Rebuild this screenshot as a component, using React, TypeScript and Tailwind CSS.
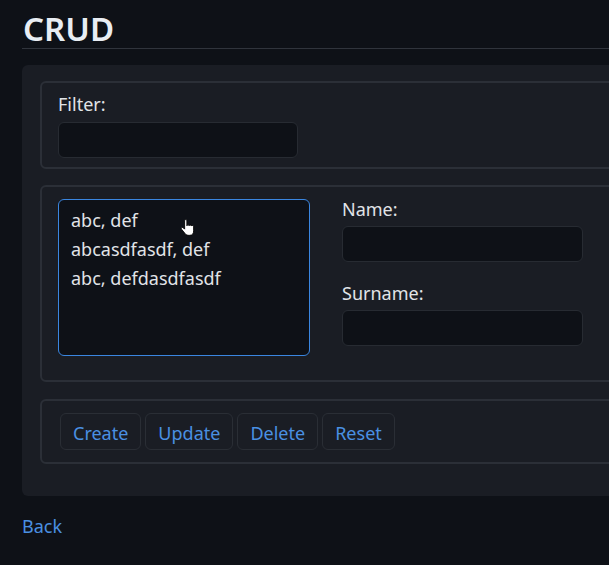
import React from 'react';

const items = ['abc, def', 'abcasdfasdf, def', 'abc, defdasdfasdf'];

// mouse pointer captured in the screenshot
function HandCursor() {
  return (
    <svg
      className="absolute left-[121px] top-[19px]"
      width="16"
      height="18"
      viewBox="0 0 14 16"
    >
      <path
        d="M4 1.5Q4 .5 5 .5Q6 .5 6 1.5V6Q6 5.2 7 5.2Q8 5.2 8 6Q8 5.4 9 5.4Q10 5.4 10 6.2Q10 5.8 11 5.8Q12 5.8 12 6.8V10.5Q12 14.5 8.5 14.5H7Q5 14.5 4 12.5L1.2 9Q.6 8 1.5 7.6Q2.3 7.3 3 8L4 9Z"
        fill="#ffffff"
        stroke="#000000"
        strokeWidth="0.8"
      />
    </svg>
  );
}

export default function App() {
  return (
    <div className="min-h-screen bg-[#0e1117] text-[#e1e4e8] font-['Noto_Sans',sans-serif] pl-[22px] pt-[10px] overflow-hidden">
      <h1 className="text-[33px] font-semibold leading-[38px] text-[#e8edf3] pl-px">CRUD</h1>
      <div className="border-t border-[#30343c]" />

      <div className="mt-4 rounded-md bg-[#1a1d24] pl-[18px] pt-4 pb-8 w-[640px]">
        {/* Filter */}
        <div className="rounded-md border-2 border-[#2b2f37] px-4 pt-[9px] pb-[9px]">
          <label className="block text-[18px] leading-6">Filter:</label>
          <input className="mt-[6px] block h-9 w-[240px] rounded-md border border-[#272b32] bg-[#0e1117] px-2 outline-none" />
        </div>

        {/* List + form */}
        <div className="mt-[16px] flex rounded-md border-2 border-[#2b2f37] px-4 pt-3 pb-6">
          <div className="relative h-[157px] w-[252px] rounded-md border border-[#3a86e0] bg-[#0e1117] px-3 pt-[6px]">
            {items.map((item) => (
              <div key={item} className="text-[18px] leading-[29px]">
                {item}
              </div>
            ))}
            <HandCursor />
          </div>
          <div className="ml-8">
            <label className="block text-[18px] leading-5">Name:</label>
            <input className="mt-[7px] block h-9 w-[241px] rounded-md border border-[#272b32] bg-[#0e1117] px-2 outline-none" />
            <label className="mt-[21px] block text-[18px] leading-5">Surname:</label>
            <input className="mt-[7px] block h-9 w-[241px] rounded-md border border-[#272b32] bg-[#0e1117] px-2 outline-none" />
          </div>
        </div>

        {/* Buttons */}
        <div className="mt-[17px] flex gap-[4px] rounded-md border-2 border-[#2b2f37] pl-[18px] pt-3 pb-[12px]">
          {['Create', 'Update', 'Delete', 'Reset'].map((b) => (
            <button
              key={b}
              className="h-[37px] rounded-md border border-[#2a2e35] bg-[#1a1d24] px-3 pt-[3px] text-[18px] leading-6 text-[#4a90e2]"
            >
              {b}
            </button>
          ))}
        </div>
      </div>

      <a href="#" className="mt-[18px] block w-fit text-[18px] leading-6 text-[#4a90e2]">
        Back
      </a>
    </div>
  );
}
